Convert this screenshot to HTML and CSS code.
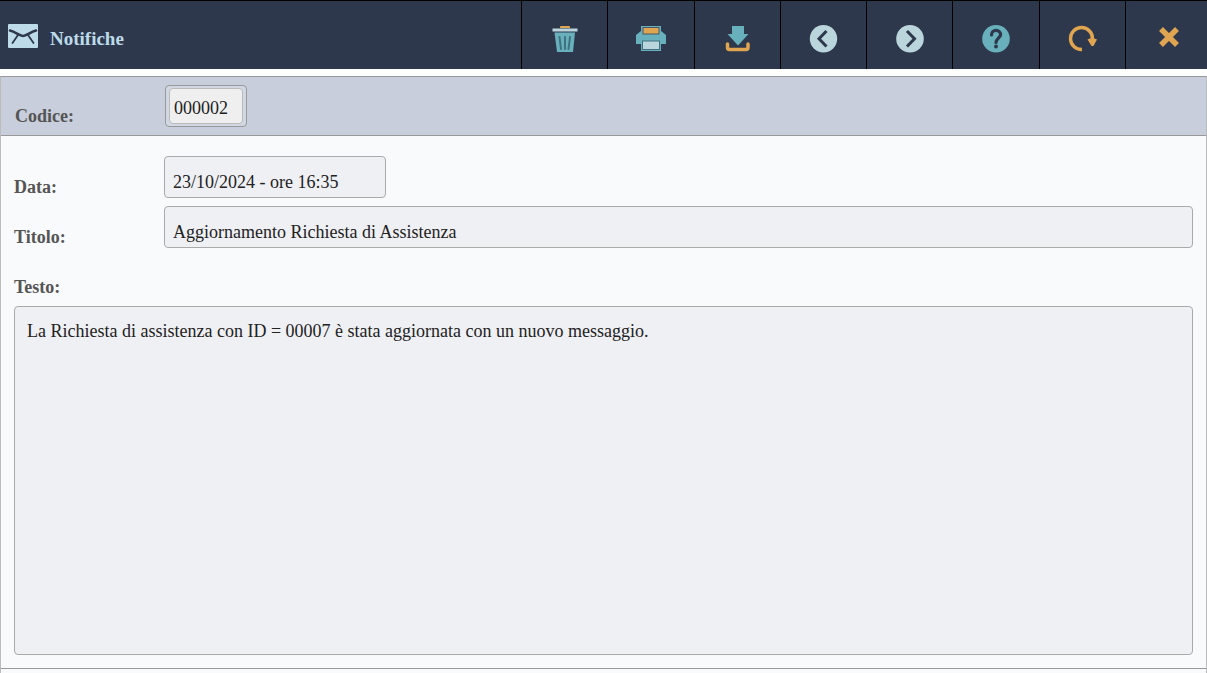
FILE: index.html
```html
<!DOCTYPE html>
<html lang="it">
<head>
<meta charset="utf-8">
<meta name="viewport" content="width=device-width, initial-scale=1">
<title>Notifiche</title>
<link rel="stylesheet" href="styles.css">
</head>
<body>
<header class="topbar">
  <div class="brand">
    <svg class="brand-icon" width="30" height="24" viewBox="0 0 30 24" aria-hidden="true">
      <rect width="30" height="24" rx="1" fill="#bddbe9"/>
      <path d="M2 6.500 C8 8 11 12 15 12 S22 8 28 6.500" fill="none" stroke="#2e384d" stroke-width="2.600" stroke-linecap="round"/>
      <path d="M10 11 L4.500 19 M20 11 L25.500 19" fill="none" stroke="#2e384d" stroke-width="1.800" stroke-linecap="round"/>
    </svg>
    <h1 class="title">Notifiche</h1>
  </div>
  <nav class="tools" aria-label="Azioni">
    <button class="tool" type="button" aria-label="Elimina">
      <svg width="30" height="30" viewBox="0 0 30 30">
        <path d="M10 3V2Q10 1 11 1H19Q20 1 20 2V3Z" fill="#e0a550"/>
        <rect x="2.500" y="3.500" width="25" height="3" fill="#bad5db"/>
        <path d="M4.500 7.500H25L23 27H7Z" fill="#67b0bc"/>
        <path d="M9.500 12L11 24M15 12V24M20 12L18.500 24" stroke="#3f7180" stroke-width="2" stroke-linecap="round"/>
      </svg>
    </button>
    <button class="tool" type="button" aria-label="Stampa">
      <svg width="30" height="30" viewBox="0 0 30 30">
        <path d="M5 1H25V6L30 10V19H25V26H5V19H0V10L5 6Z" fill="#67b0bc"/>
        <rect x="7" y="2.500" width="16" height="6.500" fill="#e0a550" stroke="#485866"/>
        <rect x="6.500" y="16" width="17" height="8.500" fill="#bad5db" stroke="#3f7180"/>
      </svg>
    </button>
    <button class="tool" type="button" aria-label="Scarica">
      <svg width="30" height="30" viewBox="0 0 30 30">
        <path d="M10 1H22V9H26.500L16 20.500L5.500 9H10Z" fill="#67b0bc"/>
        <path d="M5.500 19V22.500Q5.500 24.500 7.500 24.500H24Q26 24.500 26 22.500V19" fill="none" stroke="#e0a550" stroke-width="3.500" stroke-linecap="round"/>
      </svg>
    </button>
    <button class="tool" type="button" aria-label="Precedente">
      <svg width="30" height="30" viewBox="0 0 30 30">
        <circle cx="15.500" cy="13.800" r="13.700" fill="#bad5db"/>
        <path d="M18.500 6L11 13.800L18.500 21.500" fill="none" stroke="#2e384d" stroke-width="3"/>
      </svg>
    </button>
    <button class="tool" type="button" aria-label="Successivo">
      <svg width="30" height="30" viewBox="0 0 30 30">
        <circle cx="15" cy="13.800" r="13.800" fill="#bad5db"/>
        <path d="M12 6L19.500 13.800L12 21.500" fill="none" stroke="#2e384d" stroke-width="3"/>
      </svg>
    </button>
    <button class="tool" type="button" aria-label="Aiuto">
      <svg width="30" height="30" viewBox="0 0 30 30">
        <circle cx="15" cy="13.800" r="13.800" fill="#67b0bc"/>
        <path d="M10.500 10C10.500 3.500 20 4 19.500 10C19.200 13 15 13.500 15 17.500" fill="none" stroke="#2e384d" stroke-width="3.200" stroke-linecap="round"/>
        <circle cx="15" cy="21.500" r="2" fill="#2e384d"/>
      </svg>
    </button>
    <button class="tool" type="button" aria-label="Aggiorna">
      <svg width="30" height="30" viewBox="0 0 30 30">
        <path d="M15 24.500A11 11 0 1 1 25.500 14" fill="none" stroke="#e0a550" stroke-width="3.400"/>
        <path d="M20.500 14.500Q25 12 30 14.500L26.500 21H24.500Z" fill="#e0a550"/>
      </svg>
    </button>
    <button class="tool" type="button" aria-label="Chiudi">
      <svg width="30" height="30" viewBox="0 0 30 30">
        <path d="M8 4L24 20M24 4L8 20" stroke="#e0a550" stroke-width="5.500"/>
      </svg>
    </button>
  </nav>
</header>
<main class="panel">
  <form class="form">
    <div class="code-row">
      <label class="label" for="codice">Codice:</label>
      <div class="code-frame"><input class="code-input" id="codice" type="text" value="000002" readonly></div>
    </div>
    <div class="fields">
      <div class="row">
        <label class="label" for="data">Data:</label>
        <input class="field field-short" id="data" type="text" value="23/10/2024 - ore 16:35" readonly>
      </div>
      <div class="row">
        <label class="label" for="titolo">Titolo:</label>
        <input class="field" id="titolo" type="text" value="Aggiornamento Richiesta di Assistenza" readonly>
      </div>
      <label class="label label-text" for="testo">Testo:</label>
      <textarea class="message" id="testo" rows="16" readonly>La Richiesta di assistenza con ID = 00007 è stata aggiornata con un nuovo messaggio.</textarea>
    </div>
  </form>
</main>
</body>
</html>
```

FILE: styles.css
```css
* {
  box-sizing: border-box;
}

body {
  margin: 0;
  min-height: 100vh;
  display: flex;
  flex-direction: column;
  background: #fff;
  color: #222;
  font-family: "Liberation Serif", "Times New Roman", serif;
  font-size: 18px;
}

.topbar {
  display: flex;
  min-height: 69px;
  overflow: hidden;
  border-top: 1px solid #000;
  background: #2e384d;
}

.brand {
  flex: 1;
  display: flex;
  align-items: center;
  gap: 12px;
  padding: 8px 8px 0;
}

.brand-icon {
  margin-bottom: 6px;
}

.title {
  margin: 0;
  color: #bddbe9;
  font-size: 19px;
  line-height: 24px;
}

.tools {
  flex: 0 0 57.15%;
  display: grid;
  grid-template-columns: repeat(8, 1fr);
  margin-right: -4px;
}

.tool {
  display: flex;
  align-items: center;
  justify-content: center;
  padding: 10px 0 0;
  border: 0;
  border-left: 1px solid #000;
  background: none;
  cursor: pointer;
}

.panel {
  flex: 1;
  margin-top: 7px;
  border: 1px solid #bbb;
  border-top-color: #999;
  border-bottom: 0;
  background: #f9fafc;
}

.form {
  border-bottom: 1px solid #999;
}

.code-row {
  display: flex;
  padding: 8px 14px;
  border-bottom: 1px solid #999;
  background: #c8cedb;
}

.label {
  flex: 0 0 150px;
  padding-top: 20px;
  color: #555;
  font-weight: bold;
  line-height: 22px;
}

.code-frame {
  padding: 2px 3px;
  border: 1px solid #999;
  border-radius: 4px;
  background: #d1d7e3;
}

.code-input {
  width: 74px;
  height: 36px;
  padding: 4px 4px 0;
  border: 1px solid #bbb;
  border-radius: 4px;
  background: #efefef;
  color: #222;
  font: inherit;
}

.fields {
  display: flex;
  flex-direction: column;
  gap: 8px;
  padding: 20px 13px 13px;
}

.row {
  display: flex;
}

.field {
  flex: 1;
  min-width: 0;
  height: 42px;
  padding: 10px 8px 0;
  border: 1px solid #aaa;
  border-radius: 4px;
  background: #eff0f4;
  color: #222;
  font: inherit;
}

.field-short {
  flex: 0 1 222px;
}

.label-text {
  flex: none;
}

.message {
  display: block;
  width: 100%;
  padding: 14px 12px 13px;
  border: 1px solid #aaa;
  border-radius: 4px;
  background: #eff0f4;
  color: #222;
  font: inherit;
  line-height: 20px;
  resize: none;
}
```
